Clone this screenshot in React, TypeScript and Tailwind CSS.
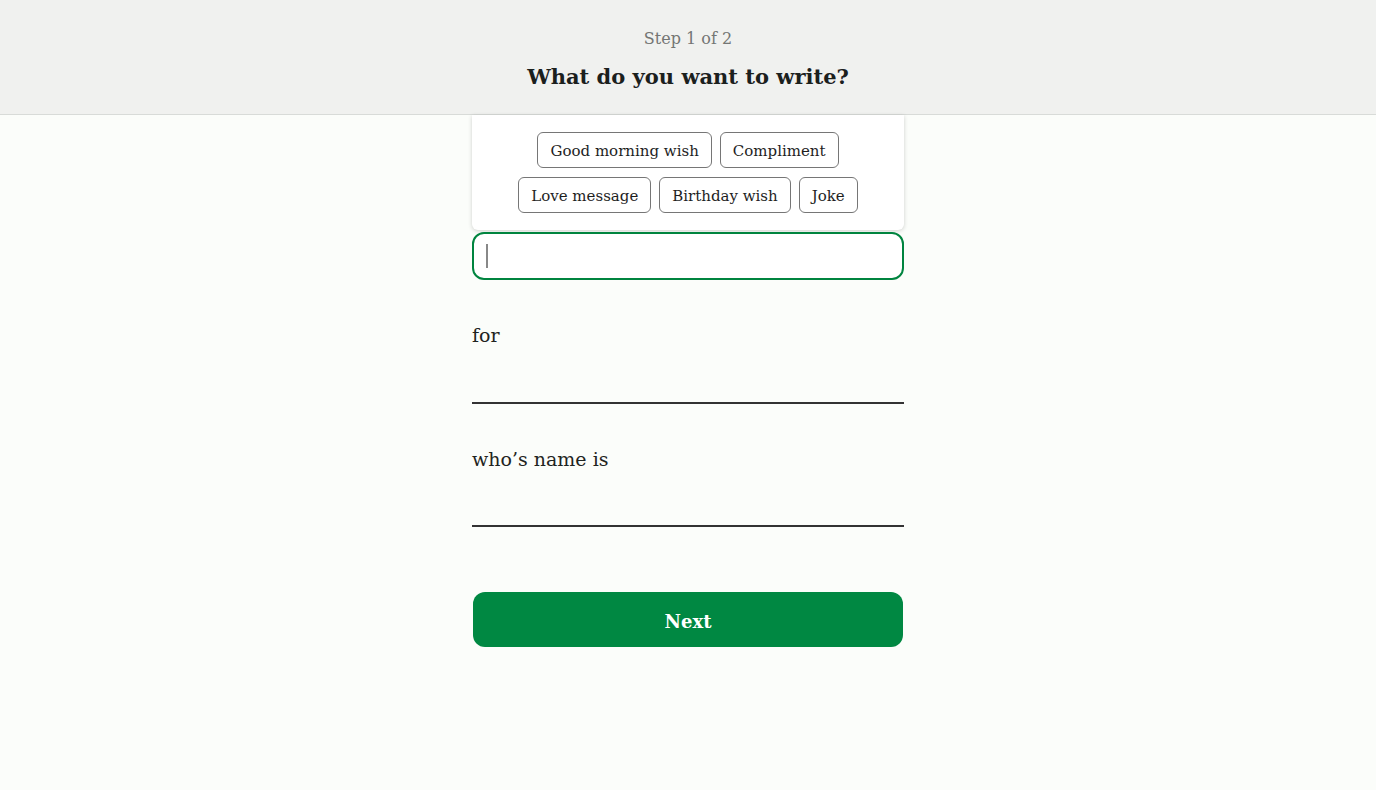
const chipsTop = ["Good morning wish", "Compliment"];
const chipsBottom = ["Love message", "Birthday wish", "Joke"];

function Chip({ label }: { label: string }) {
  return (
    <button className="h-9 rounded-md border border-[#767676] bg-white px-3 pt-[3px] text-[15px] leading-none text-[#1e1e1e]">
      {label}
    </button>
  );
}

export default function App() {
  return (
    <div
      className="min-h-[790px] bg-[#fbfdfa] text-[#1f2421]"
      style={{ fontFamily: '"Roboto Slab", "DejaVu Serif", serif' }}
    >
      <header className="flex h-[115px] flex-col items-center border-b border-[#d8dbd8] bg-[#f0f1ef] pt-[28px]">
        <p className="text-[16px] leading-[22px] text-[#747674]">Step 1 of 2</p>
        <h1 className="mt-[13px] text-[21px] font-bold leading-[28px] text-[#1b201d]">
          What do you want to write?
        </h1>
      </header>

      <main className="mx-auto flex w-[432px] flex-col">
        <div className="flex flex-col items-center gap-[9px] rounded-b-md bg-white py-[17px] shadow-[0_1px_4px_rgba(0,0,0,0.18)]">
          <div className="flex gap-2">
            {chipsTop.map((c) => (
              <Chip key={c} label={c} />
            ))}
          </div>
          <div className="flex gap-2">
            {chipsBottom.map((c) => (
              <Chip key={c} label={c} />
            ))}
          </div>
        </div>

        <div className="mt-[2px] flex h-12 items-center rounded-xl border-2 border-[#00843f] bg-white px-[12px]">
          <span className="h-[24px] w-[2px] bg-[#888]" />
        </div>

        <label className="mt-[43px] text-[19px] leading-[24px]">for</label>
        <div className="mt-[55px] h-[2px] bg-[#333]" />

        <label className="mt-[43px] text-[19px] leading-[24px]">who’s name is</label>
        <div className="mt-[54px] h-[2px] bg-[#333]" />

        <button className="mx-px mt-[65px] h-[55px] rounded-xl bg-[#008842] pt-[3px] text-[18px] font-bold text-white">
          Next
        </button>
      </main>
    </div>
  );
}
